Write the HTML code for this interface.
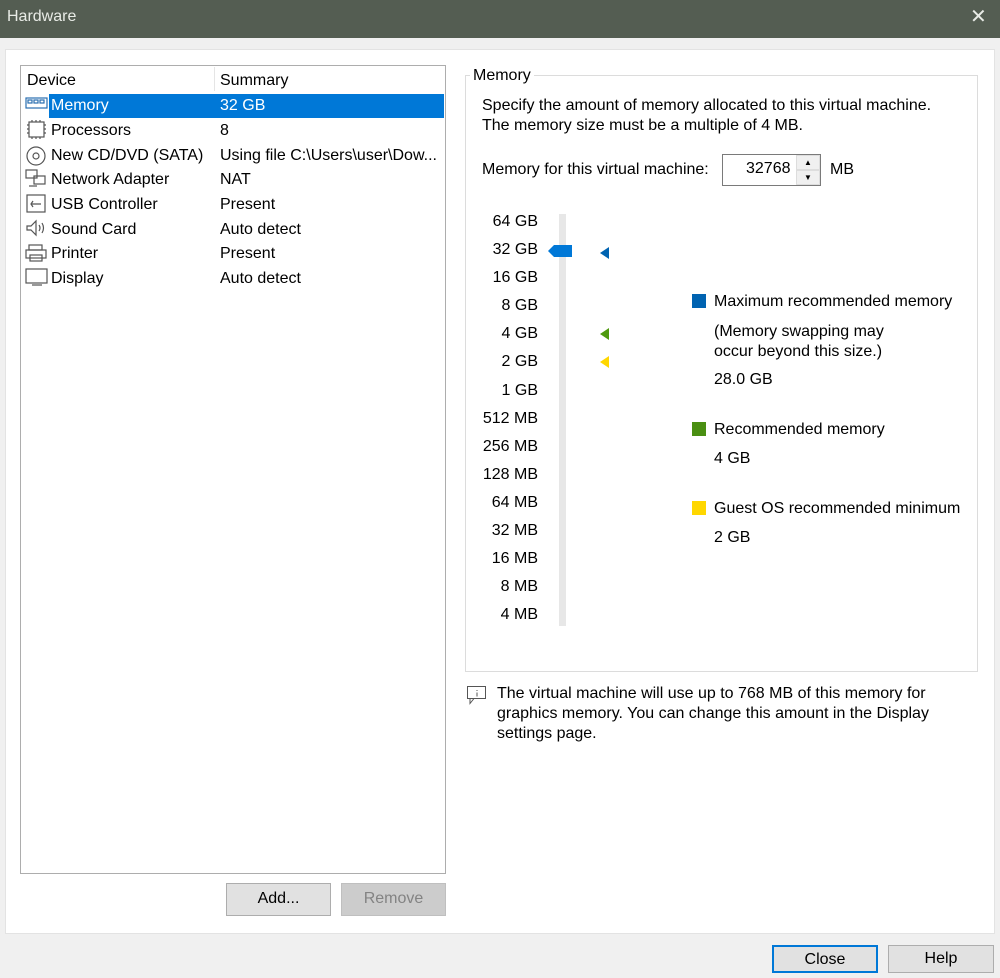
<!DOCTYPE html>
<html><head><style>
*{margin:0;padding:0;box-sizing:border-box}
body{width:1000px;height:978px;background:#f0f0f0;font-family:"Liberation Sans",sans-serif;font-size:16px;color:#000;position:relative;overflow:hidden}
.a{position:absolute;white-space:nowrap}
.btn{position:absolute;border:1px solid #adadad;background:#e1e1e1;text-align:center;line-height:30px}
</style></head><body>
<div class="a" style="left:0;top:0;width:1000px;height:38px;background:#545d52"></div>
<div class="a" style="left:7px;top:8px;color:#e8ebe6;font-size:16px">Hardware</div>
<div class="a" style="left:970px;top:4px;color:#e8ebe6;font-size:20px">✕</div>
<div class="a" style="left:5px;top:49px;width:990px;height:885px;background:#fff;border:1px solid #e3e3e3"></div>
<div class="a" style="left:20px;top:65px;width:426px;height:809px;border:1px solid #adadad;background:#fff"></div>
<div class="a" style="left:214px;top:67px;width:1px;height:24px;background:#e5e5e5"></div>
<div class="a" style="left:27px;top:72px">Device</div>
<div class="a" style="left:220px;top:72px">Summary</div>
<div class="a" style="left:49px;top:94px;width:395px;height:24px;background:#0078d7"></div>
<svg class="a" style="left:24px;top:94px" width="26" height="200" viewBox="0 0 26 200" fill="none" stroke="#555" stroke-width="1.2">
<rect x="2" y="4" width="21" height="10" stroke="#2a6fb0"/><rect x="4" y="6" width="4" height="3" stroke="#2a6fb0"/><rect x="10" y="6" width="4" height="3" stroke="#2a6fb0"/><rect x="16" y="6" width="4" height="3" stroke="#2a6fb0"/>
<rect x="5" y="28" width="15" height="15"/><path d="M3 31h2M3 35h2M3 39h2M20 31h2M20 35h2M20 39h2M8 26v2M12 26v2M16 26v2M8 43v2M12 43v2M16 43v2"/>
<circle cx="12" cy="62" r="9"/><circle cx="12" cy="62" r="3"/>
<rect x="2" y="76" width="11" height="8"/><rect x="10" y="82" width="11" height="8"/><path d="M5 92h8"/>
<rect x="3" y="101" width="18" height="17"/><path d="M7 110h10M9 107l-2 3 2 3"/>
<path d="M3 132h4l5-5v14l-5-5H3z M15 131q2 3 0 6M18 129q3 5 0 10"/>
<rect x="5" y="151" width="13" height="5"/><rect x="2" y="156" width="20" height="8"/><rect x="6" y="161" width="12" height="6"/>
<rect x="2" y="175" width="21" height="14"/><path d="M8 191h10"/>
</svg>
<div class="a" style="left:51px;top:97px;color:#fff">Memory</div><div class="a" style="left:220px;top:97px;color:#fff">32 GB</div>
<div class="a" style="left:51px;top:122px">Processors</div><div class="a" style="left:220px;top:122px">8</div>
<div class="a" style="left:51px;top:147px">New CD/DVD (SATA)</div><div class="a" style="left:220px;top:147px">Using file C:\Users\user\Dow...</div>
<div class="a" style="left:51px;top:171px">Network Adapter</div><div class="a" style="left:220px;top:171px">NAT</div>
<div class="a" style="left:51px;top:196px">USB Controller</div><div class="a" style="left:220px;top:196px">Present</div>
<div class="a" style="left:51px;top:221px">Sound Card</div><div class="a" style="left:220px;top:221px">Auto detect</div>
<div class="a" style="left:51px;top:245px">Printer</div><div class="a" style="left:220px;top:245px">Present</div>
<div class="a" style="left:51px;top:270px">Display</div><div class="a" style="left:220px;top:270px">Auto detect</div>
<div class="btn" style="left:226px;top:883px;width:105px;height:33px">Add...</div>
<div class="btn" style="left:341px;top:883px;width:105px;height:33px;background:#cccccc;border-color:#bfbfbf;color:#838383">Remove</div>
<div class="btn" style="left:772px;top:945px;width:106px;height:28px;line-height:26px;border:2px solid #0078d7">Close</div>
<div class="btn" style="left:888px;top:945px;width:106px;height:28px;line-height:26px">Help</div>
<div class="a" style="left:465px;top:75px;width:513px;height:597px;border:1px solid #dcdcdc"></div>
<div class="a" style="left:470px;top:67px;background:#fff;padding:0 3px">Memory</div>
<div class="a" style="left:482px;top:96px;line-height:20px">Specify the amount of memory allocated to this virtual machine.<br>The memory size must be a multiple of 4 MB.</div>
<div class="a" style="left:482px;top:161px">Memory for this virtual machine:</div>
<div class="a" style="left:722px;top:154px;width:99px;height:32px;border:1px solid #7a7a7a;background:#fff"></div>
<div class="a" style="left:746px;top:160px">32768</div>
<div class="a" style="left:796px;top:155px;width:24px;height:15px;background:#f0f0f0;border:1px solid #ddd;font-size:8px;text-align:center;line-height:13px">▲</div>
<div class="a" style="left:796px;top:170px;width:24px;height:15px;background:#f0f0f0;border:1px solid #ddd;font-size:8px;text-align:center;line-height:13px">▼</div>
<div class="a" style="left:830px;top:161px">MB</div>
<div class="a" style="left:559px;top:214px;width:7px;height:412px;background:#e7e7e7"></div>
<svg class="a" style="left:545px;top:240px" width="70" height="132">
<path d="M3 11l6-6h18v12H9z" fill="#0078d7"/>
<path d="M64 7v12l-9-6z" fill="#0063b1"/>
<path d="M64 88v12l-9-6z" fill="#4f9a0e"/>
<path d="M64 116v12l-9-6z" fill="#ffd700"/>
</svg>
<div class="a" style="left:692px;top:294px;width:14px;height:14px;background:#0063b1"></div>
<div class="a" style="left:714px;top:293px">Maximum recommended memory</div>
<div class="a" style="left:714px;top:322px;line-height:20px">(Memory swapping may<br>occur beyond this size.)</div>
<div class="a" style="left:714px;top:371px">28.0 GB</div>
<div class="a" style="left:692px;top:422px;width:14px;height:14px;background:#4a8f12"></div>
<div class="a" style="left:714px;top:421px">Recommended memory</div>
<div class="a" style="left:714px;top:450px">4 GB</div>
<div class="a" style="left:692px;top:501px;width:14px;height:14px;background:#ffd700"></div>
<div class="a" style="left:714px;top:500px">Guest OS recommended minimum</div>
<div class="a" style="left:714px;top:529px">2 GB</div>
<svg class="a" style="left:466px;top:685px" width="22" height="20" fill="none" stroke="#555"><rect x="1.5" y="1.5" width="18" height="12"/><path d="M4 13.5v5l4-5M11 5v1M11 7.5v4"/></svg>
<div class="a" style="left:497px;top:684px;line-height:20px">The virtual machine will use up to 768 MB of this memory for<br>graphics memory. You can change this amount in the Display<br>settings page.</div>
<div style="position:absolute;left:460px;top:208px;width:78px;text-align:right;line-height:28.1px">64 GB<br>32 GB<br>16 GB<br>8 GB<br>4 GB<br>2 GB<br>1 GB<br>512 MB<br>256 MB<br>128 MB<br>64 MB<br>32 MB<br>16 MB<br>8 MB<br>4 MB</div>
</body></html>
